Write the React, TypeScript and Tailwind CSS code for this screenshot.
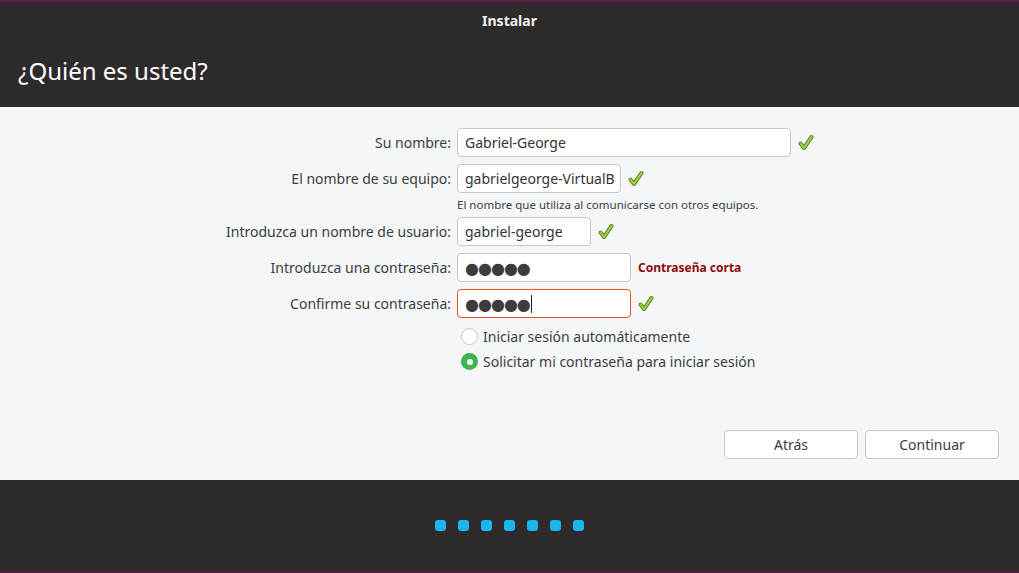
import React from "react"

const font = { fontFamily: '"Noto Sans", "DejaVu Sans", sans-serif' }

function Check() {
  return (
    <svg width="16" height="17" viewBox="0 0 16 17" className="shrink-0">
      <polyline points="2.5,9.5 6,14 13.5,3" fill="none" stroke="#5f8f1f" strokeWidth="4" strokeLinecap="round" strokeLinejoin="round" />
      <polyline points="2.5,9.5 6,14 13.5,3" fill="none" stroke="#a5d050" strokeWidth="2" strokeLinecap="round" strokeLinejoin="round" />
    </svg>
  )
}

function Field({ width, children, focused }: { width: string; children: React.ReactNode; focused?: boolean }) {
  return (
    <div
      className={`${width} h-[29px] flex items-center px-[7px] bg-white rounded-[4px] border overflow-hidden whitespace-nowrap text-[14px] text-[#333] ${
        focused ? "border-[#e95420]" : "border-[#c8c8c8]"
      }`}
    >
      {children}
    </div>
  )
}

function Dots() {
  return <span className="text-[16px] tracking-[-1px] text-[#3c3c3c] leading-none">●●●●●</span>
}

export default function App() {
  return (
    <div className="w-[1019px] h-[573px] flex flex-col bg-[#2c2a2b] text-[#3d3d3d]" style={font}>
      <div className="h-[2px] bg-[#5c1a47]" />
      <header className="h-[105px] flex flex-col">
        <div className="h-[36px] flex items-center justify-center text-[14px] font-bold text-[#f2f2f2]">Instalar</div>
        <h1 className="mt-[15px] pl-[18px] text-[24px] text-white">¿Quién es usted?</h1>
      </header>

      <main className="h-[373px] bg-[#f5f6f7] flex flex-col">
        <div className="grid grid-cols-[451px_1fr] gap-x-[6px] pt-[21px] text-[14px] items-center">
          <label className="text-right">Su nombre:</label>
          <div className="flex items-center gap-[7px]">
            <Field width="w-[334px]">Gabriel-George</Field>
            <Check />
          </div>

          <label className="text-right mt-[7px]">El nombre de su equipo:</label>
          <div className="flex items-center gap-[7px] mt-[7px]">
            <Field width="w-[164px]">gabrielgeorge-VirtualB</Field>
            <Check />
          </div>

          <div />
          <div className="text-[11.5px] h-[24px] flex items-center">El nombre que utiliza al comunicarse con otros equipos.</div>

          <label className="text-right">Introduzca un nombre de usuario:</label>
          <div className="flex items-center gap-[7px]">
            <Field width="w-[134px]">gabriel-george</Field>
            <Check />
          </div>

          <label className="text-right mt-[7px]">Introduzca una contraseña:</label>
          <div className="flex items-center gap-[7px] mt-[7px]">
            <Field width="w-[174px]">
              <Dots />
            </Field>
            <span className="text-[12px] font-bold text-[#8b0d0d]">Contraseña corta</span>
          </div>

          <label className="text-right mt-[7px]">Confirme su contraseña:</label>
          <div className="flex items-center gap-[7px] mt-[7px]">
            <Field width="w-[174px]" focused>
              <Dots />
              <span className="w-px h-[18px] bg-[#222] ml-[1px]" />
            </Field>
            <Check />
          </div>

          <div />
          <div className="flex flex-col mt-[6px] pl-[4px]">
            <div className="h-[25px] flex items-center gap-[5px]">
              <span className="w-[17px] h-[17px] rounded-full border border-[#c4c4c4] bg-white" />
              <span>Iniciar sesión automáticamente</span>
            </div>
            <div className="h-[25px] flex items-center gap-[5px]">
              <span className="w-[17px] h-[17px] rounded-full bg-[#3eb34f] flex items-center justify-center">
                <span className="w-[6px] h-[6px] rounded-full bg-white" />
              </span>
              <span>Solicitar mi contraseña para iniciar sesión</span>
            </div>
          </div>
        </div>

        <div className="mt-auto mb-[21px] mr-[20px] flex justify-end gap-[7px] text-[14px]">
          <button className="w-[134px] h-[29px] bg-white border border-[#c8c8c8] rounded-[4px]">Atrás</button>
          <button className="w-[134px] h-[29px] bg-white border border-[#c8c8c8] rounded-[4px]">Continuar</button>
        </div>
      </main>

      <footer className="flex-1 flex items-center justify-center gap-[12px]">
        {[0, 1, 2, 3, 4, 5, 6].map((i) => (
          <span key={i} className="w-[11px] h-[11px] rounded-[3px] bg-[#19b6ee]" />
        ))}
      </footer>
      <div className="h-[2px] bg-[#5c1a47]" />
    </div>
  )
}
